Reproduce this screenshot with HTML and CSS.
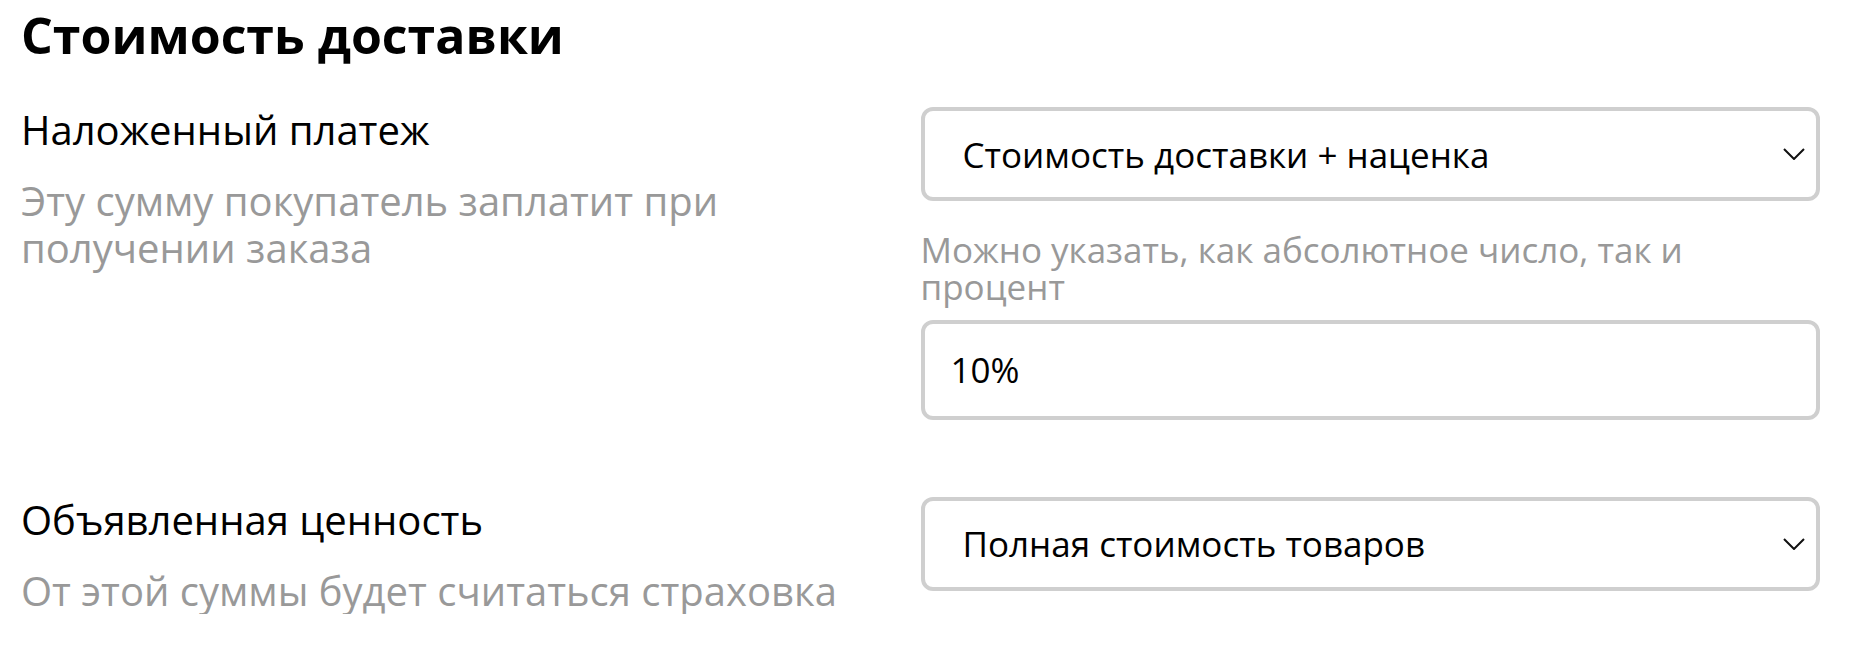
FILE: index.html
```html
<!DOCTYPE html>
<html lang="ru">
<head>
    <meta charset="UTF-8">
    <meta name="viewport" content="width=device-width, initial-scale=1.0">
    <title>Стоимость доставки</title>
    <link rel="stylesheet" href="styles.css">
</head>
<body>
    <div class="delivery-cost">
        <h1>Стоимость доставки</h1>

        <div class="field-row">
            <div class="field-info">
                <div class="field-label">Наложенный платеж</div>
                <div class="field-desc">Эту сумму покупатель заплатит при получении заказа</div>
            </div>
            <div class="field-control">
                <div class="select-box">
                    <span>Стоимость доставки + наценка</span>
                    <svg class="chevron" width="22" height="12" viewBox="0 0 22 12">
                        <path d="M1 1 L11 11 L21 1" fill="none" stroke="#111" stroke-width="2"/>
                    </svg>
                </div>
                <div class="field-hint">Можно указать, как абсолютное число, так и процент</div>
                <input class="text-input" type="text" value="10%">
            </div>
        </div>

        <div class="field-row">
            <div class="field-info">
                <div class="field-label">Объявленная ценность</div>
                <div class="field-desc">От этой суммы будет считаться страховка</div>
            </div>
            <div class="field-control">
                <div class="select-box">
                    <span>Полная стоимость товаров</span>
                    <svg class="chevron" width="22" height="12" viewBox="0 0 22 12">
                        <path d="M1 1 L11 11 L21 1" fill="none" stroke="#111" stroke-width="2"/>
                    </svg>
                </div>
            </div>
        </div>
    </div>
</body>
</html>
```

FILE: styles.css
```css
* {
    margin: 0;
    padding: 0;
    box-sizing: border-box;
}

body {
    font-family: 'Open Sans', 'Noto Sans', sans-serif;
    background: #fff;
    color: #000;
}

.delivery-cost {
    padding: 5px 30px 0 21px;
}

h1 {
    font-size: 50px;
    font-weight: 700;
    line-height: 1.2;
    margin-bottom: 42px;
}

.field-row {
    display: grid;
    grid-template-columns: 1fr 1fr;
    align-items: start;
    margin-bottom: 77px;
}

.field-row:last-child {
    margin-bottom: 0;
}

.field-info {
    padding-right: 40px;
}

.field-label {
    font-size: 40px;
    line-height: 46px;
}

.field-desc {
    margin-top: 24px;
    font-size: 40px;
    line-height: 47px;
    color: #999;
}

.select-box {
    display: flex;
    align-items: center;
    justify-content: space-between;
    height: 94px;
    padding: 0 11px 0 38px;
    border: 4px solid #cfcfcf;
    border-radius: 12px;
    font-size: 35px;
}

.chevron {
    display: block;
}

.field-hint {
    margin-top: 30px;
    max-width: 820px;
    font-size: 35px;
    line-height: 37.4px;
    color: #999;
}

.text-input {
    display: block;
    width: 100%;
    height: 100px;
    margin-top: 14px;
    padding: 0 26px;
    border: 4px solid #cfcfcf;
    border-radius: 12px;
    font-family: inherit;
    font-size: 35px;
    color: #000;
    outline: none;
}
```
